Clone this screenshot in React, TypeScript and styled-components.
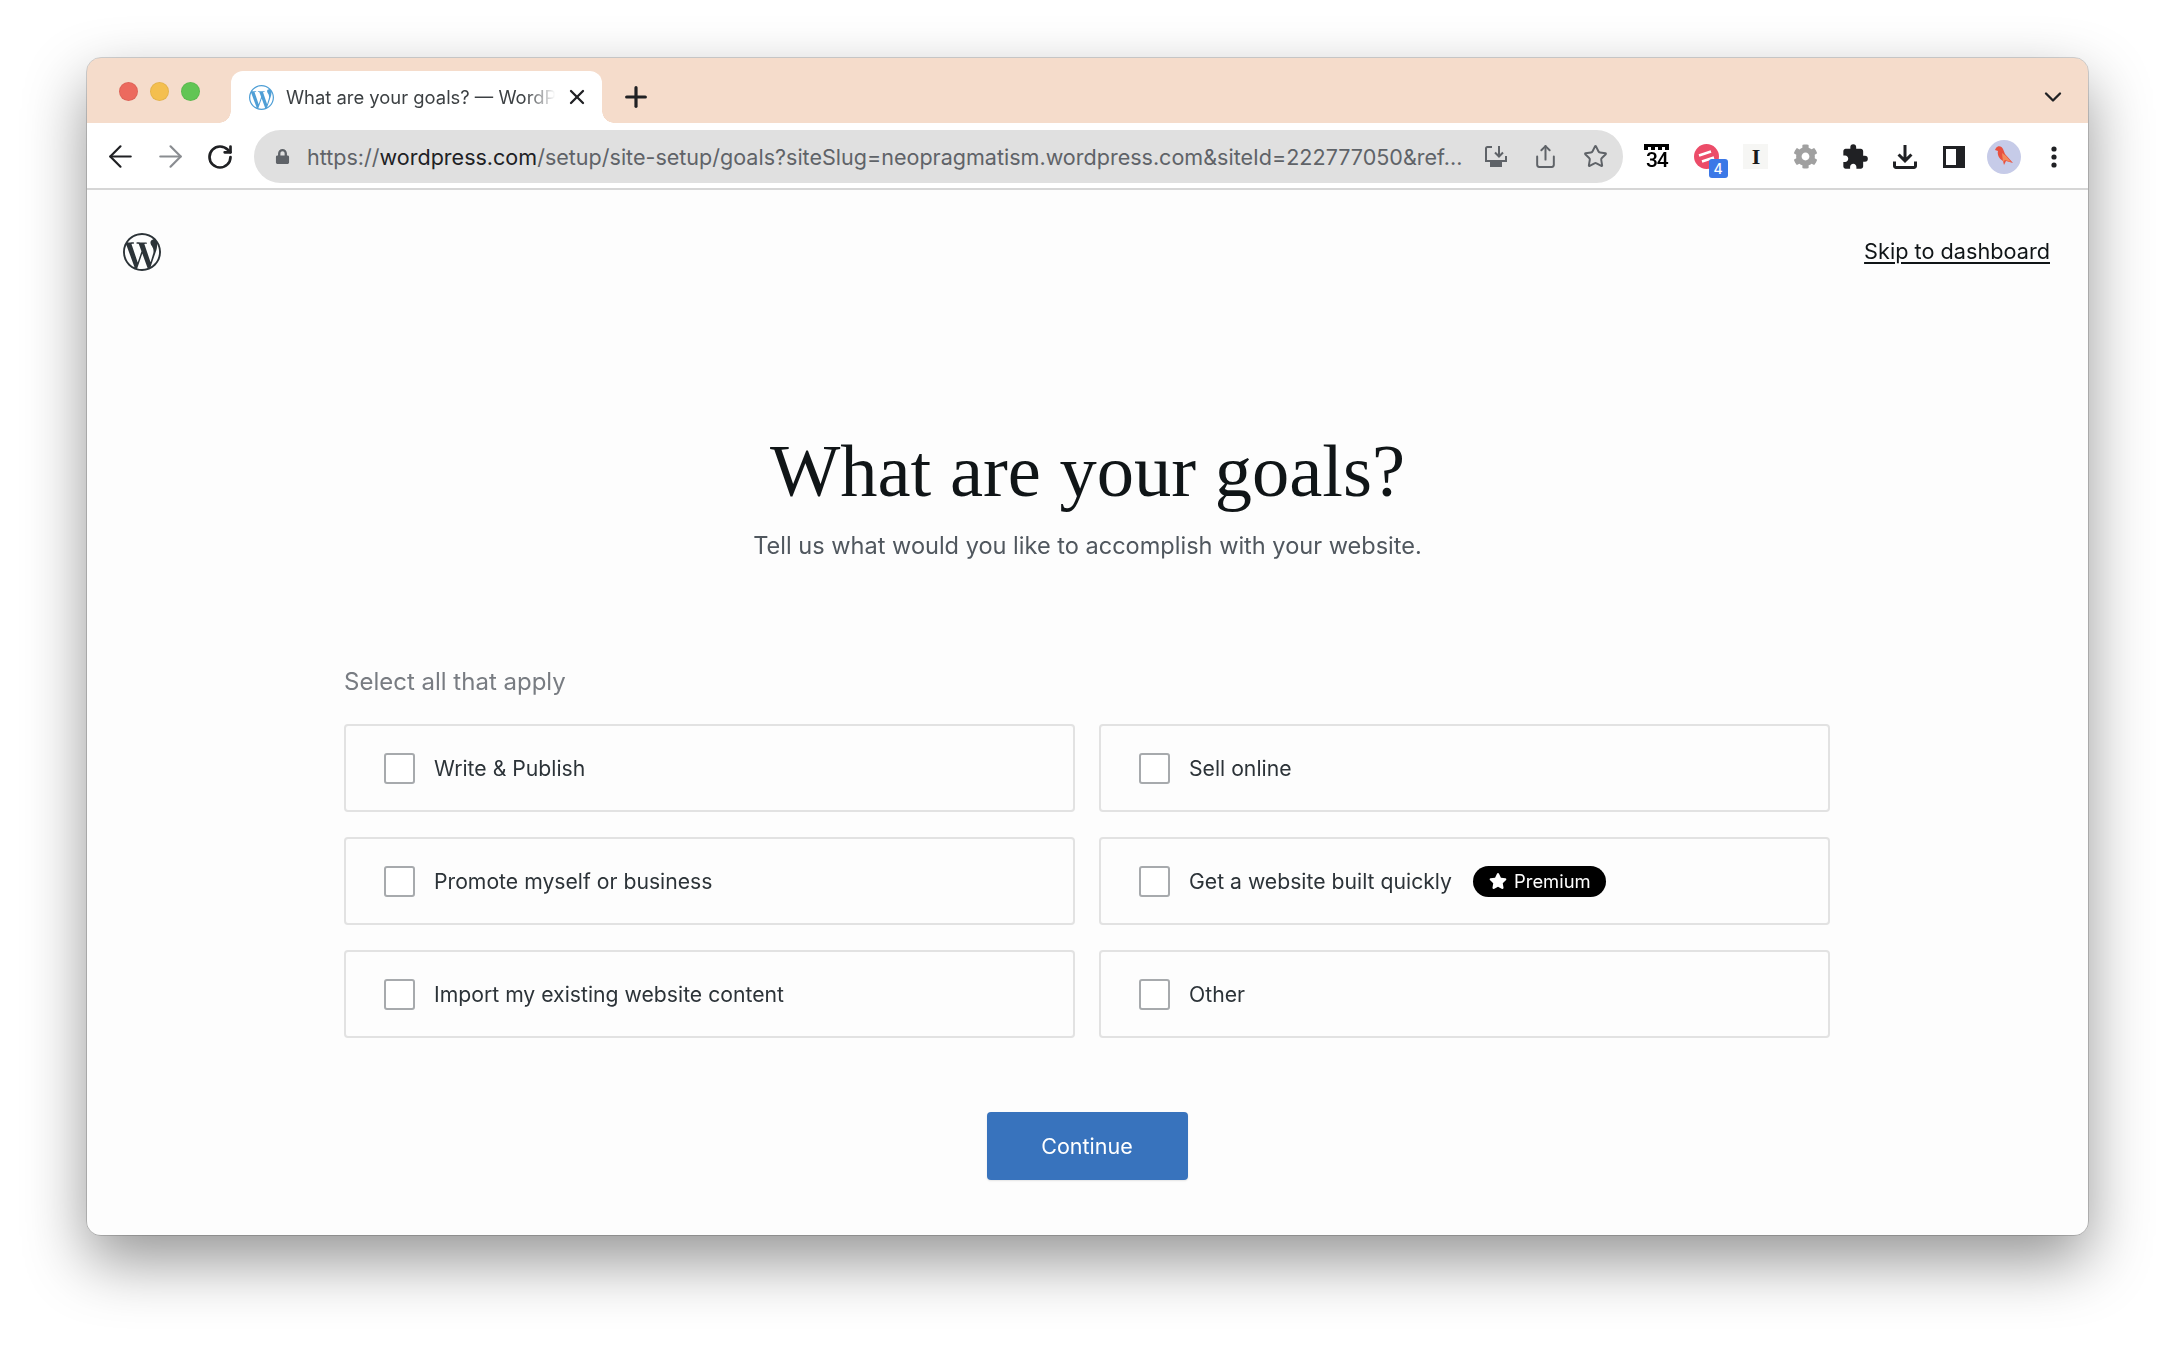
import React from 'react'
import styled, { createGlobalStyle } from 'styled-components'
import { ArrowLeft, ArrowRight, ChevronDown, Plus, RotateCw, Share, Star, X } from 'lucide-react'
import { FaCog, FaLock, FaStar } from 'react-icons/fa'
import { MdExtension, MdOutlineFileDownload } from 'react-icons/md'
import { SiWordpress } from 'react-icons/si'

const UI_FONT = '"Inter", "Liberation Sans", sans-serif'

const GlobalStyle = createGlobalStyle`
  html, body {
    margin: 0;
    padding: 0;
    background: #ffffff;
  }
  * {
    box-sizing: border-box;
  }
`

const Stage = styled.div`
  width: 2174px;
  height: 1350px;
  padding: 58px 0 0 87px;
  overflow: hidden;
  font-family: ${UI_FONT};
`

const Stack = styled.div`
  display: grid;
  > * {
    grid-area: 1 / 1;
  }
`

const Shadow = styled.div`
  width: 2001px;
  height: 1177px;
  border-radius: 14px;
  box-shadow: 0 26px 62px rgba(0, 0, 0, 0.42);
`

const Window = styled.div`
  width: 2001px;
  height: 1177px;
  display: flex;
  flex-direction: column;
  border-radius: 14px;
  overflow: hidden;
  background: #fdfdfd;
  outline: 1px solid rgba(0, 0, 0, 0.16);
  filter: blur(0.35px);
`

const TabBar = styled.div`
  height: 65px;
  flex: none;
  display: flex;
  background: #f5dccb;
  padding-left: 32px;
`

const Lights = styled.div`
  display: flex;
  gap: 12px;
  padding-top: 24px;
`

const Light = styled.span<{ $color: string }>`
  width: 19px;
  height: 19px;
  border-radius: 50%;
  background: ${({ $color }) => $color};
  border: 1px solid rgba(0, 0, 0, 0.06);
`

const Tab = styled.div`
  position: relative;
  width: 371px;
  height: 52px;
  margin: 13px 0 0 31px;
  display: flex;
  align-items: center;
  padding: 0 0 0 18px;
  background: #ffffff;
  border-radius: 12px 12px 0 0;
  color: #3c4043;

  &::before,
  &::after {
    content: '';
    position: absolute;
    bottom: 0;
    width: 12px;
    height: 12px;
  }
  &::before {
    left: -12px;
    background: radial-gradient(circle at 0 0, transparent 11.5px, #ffffff 12px);
  }
  &::after {
    right: -12px;
    background: radial-gradient(circle at 100% 0, transparent 11.5px, #ffffff 12px);
  }
`

const TabTitle = styled.span`
  width: 272px;
  margin-left: 12px;
  font-size: 18.4px;
  white-space: nowrap;
  overflow: hidden;
  -webkit-mask-image: linear-gradient(90deg, #000 88%, transparent 99%);
  mask-image: linear-gradient(90deg, #000 88%, transparent 99%);
`

const TabClose = styled.span`
  display: flex;
  margin-left: 7px;
  color: #202124;
`

const NewTab = styled.span`
  display: flex;
  margin: 13px 0 0 18px;
  height: 52px;
  align-items: center;
  color: #202124;
`

const TabMenu = styled.span`
  display: flex;
  margin-left: auto;
  margin-right: 21px;
  align-items: center;
  padding-top: 13px;
  color: #202124;
`

const Toolbar = styled.div`
  height: 67px;
  flex: none;
  display: flex;
  align-items: flex-start;
  padding: 7px 0 0 8px;
  background: #ffffff;
  border-bottom: 2px solid #d6d6d6;
`

const ToolSlot = styled.span<{ $width?: number; $color?: string }>`
  position: relative;
  width: ${({ $width }) => $width || 50}px;
  height: 53px;
  flex: none;
  display: flex;
  align-items: center;
  justify-content: center;
  color: ${({ $color }) => $color || '#202124'};
`

const AddressBar = styled.div`
  width: 1369px;
  height: 53px;
  flex: none;
  margin: 0 9px;
  display: flex;
  align-items: center;
  padding: 0 3px 0 21px;
  border-radius: 27px;
  background: #e0e0e0;
  color: #5f6368;
`

const Url = styled.span`
  flex: 1;
  min-width: 0;
  margin: 0 6px 0 17px;
  font-size: 21.54px;
  white-space: nowrap;
  overflow: hidden;
  color: #5f6368;

  b {
    font-weight: 400;
    color: #202124;
  }
`

const Calendar = styled.span`
  width: 25px;
  display: flex;
  flex-direction: column;
  align-items: center;
  color: #000000;
  font-family: Roboto, sans-serif;
  font-size: 21px;
  font-weight: 500;
  letter-spacing: -1.2px;
  line-height: 17px;

  &::before {
    content: '';
    width: 25px;
    height: 6px;
    margin-bottom: 2px;
    background:
      linear-gradient(#000000, #000000) top / 100% 3px no-repeat,
      repeating-linear-gradient(90deg, #000000 0 4px, #ffffff 4px 7px);
  }
`

const CountBadge = styled.span`
  position: absolute;
  left: 27px;
  top: 29px;
  width: 19px;
  height: 19px;
  border-radius: 3px;
  background: #3b78e7;
  color: #ffffff;
  font-size: 14px;
  font-weight: 500;
  line-height: 19px;
  text-align: center;
`

const SerifI = styled.span`
  width: 25px;
  height: 25px;
  background: #f6f6f4;
  color: #1a1a1a;
  font-family: 'Liberation Serif', serif;
  font-size: 22px;
  font-weight: 700;
  line-height: 25px;
  text-align: center;
`

const Avatar = styled.span`
  width: 34px;
  height: 34px;
  display: flex;
  align-items: center;
  justify-content: center;
  border-radius: 50%;
  background: #c6cbe8;
`

const Page = styled.div`
  flex: 1;
  display: flex;
  flex-direction: column;
  background: #fdfdfd;
`

const PageHeader = styled.header`
  display: flex;
  align-items: center;
  justify-content: space-between;
  padding: 43px 38px 0 36px;
  color: #2c3338;
`

const SkipLink = styled.a`
  margin-top: -3px;
  color: #101517;
  font-size: 21.7px;
  text-decoration: underline;
  text-underline-offset: 3px;
`

const Main = styled.main`
  display: flex;
  flex-direction: column;
  align-items: center;
  padding-top: 159px;
`

const Title = styled.h1`
  margin: 0;
  color: #101517;
  font-family: 'Liberation Serif', serif;
  font-size: 74.5px;
  font-weight: 400;
  line-height: 82px;
`

const Subtitle = styled.p`
  margin: 17px 0 0;
  color: #50575e;
  font-size: 23.55px;
  line-height: 34px;
`

const Form = styled.form`
  width: 1487px;
  margin-top: 102px;
`

const Hint = styled.div`
  color: #787c82;
  font-size: 24px;
  line-height: 34px;
  margin-bottom: 25px;
`

const OptionGrid = styled.div`
  display: grid;
  grid-template-columns: 731px 731px;
  grid-auto-rows: 88px;
  column-gap: 24px;
  row-gap: 25px;
`

const Option = styled.label`
  display: flex;
  align-items: center;
  padding-left: 38px;
  border: 2px solid #e2e2e2;
  border-radius: 4px;
  background: #fdfdfd;
  color: #2c3338;
  font-size: 21.2px;
`

const Box = styled.span`
  width: 31px;
  height: 31px;
  flex: none;
  margin-right: 19px;
  border: 2px solid #a7aaad;
  border-radius: 3px;
  background: #ffffff;
`

const PremiumBadge = styled.span`
  height: 31px;
  margin-left: 21px;
  display: flex;
  align-items: center;
  gap: 7px;
  padding: 0 15px 0 16px;
  border-radius: 16px;
  background: #000000;
  color: #ffffff;
  font-size: 18.4px;
`

const Actions = styled.div`
  width: 1486px;
  display: flex;
  justify-content: center;
  margin-top: 74px;
`

const ContinueButton = styled.button`
  width: 201px;
  height: 68px;
  border: 0;
  border-radius: 4px;
  background: #3873bd;
  color: #ffffff;
  font-family: ${UI_FONT};
  font-size: 21.5px;
  box-shadow: 0 1px 2px rgba(0, 0, 0, 0.1);
`

const options = [
  { label: 'Write & Publish' },
  { label: 'Sell online' },
  { label: 'Promote myself or business' },
  { label: 'Get a website built quickly', premium: true },
  { label: 'Import my existing website content' },
  { label: 'Other' },
]

const InstallIcon = () => (
  <svg width="22" height="21" viewBox="0 0 22 21" fill="none" stroke="currentColor" strokeWidth="2">
    <path d="M7 1H2.500A1.500 1.500 0 0 0 1 2.500V15h20v-5" />
    <path d="M14 0v10M10 6.500 14 10.500l4-4" />
    <path d="M6 16h10v4H6z" fill="currentColor" />
  </svg>
)

const SidePanelIcon = () => (
  <svg width="22" height="22" viewBox="0 0 22 22">
    <path fill="#202124" d="M0 0h22v22H0zM3 3v16h10V3z" />
  </svg>
)

const KebabIcon = () => (
  <svg width="8" height="22" viewBox="0 0 8 22" fill="#202124">
    <circle cx="4" cy="3" r="2.600" />
    <circle cx="4" cy="11" r="2.600" />
    <circle cx="4" cy="19" r="2.600" />
  </svg>
)

const BirdIcon = () => (
  <svg width="20" height="24" viewBox="0 0 20 24">
    <path fill="#e8503f" d="M2 3c2-3 6-2 7 1l2 5 8 9-7-2-2 4-1-4C5 14 3 9 4 6L1 5z" />
    <path fill="#f48a5c" d="M8 8l4 3 5 6-6-2-2 2z" />
  </svg>
)

const PocketIcon = () => (
  <svg width="25" height="25" viewBox="0 0 25 25">
    <circle cx="12.500" cy="12.500" r="12.500" fill="#ec4c69" />
    <path d="M5 11.500 17 7.500M8 17.500 20 13.500" stroke="#ffffff" strokeWidth="2.600" />
  </svg>
)

const App = () => (
  <Stage>
    <GlobalStyle />
    <Stack>
      <Shadow />
      <Window>
        <TabBar>
          <Lights>
            <Light $color="#ec6a5e" />
            <Light $color="#f4bf4f" />
            <Light $color="#61c554" />
          </Lights>
          <Tab>
            <SiWordpress size={25} color="#4f9fd6" />
            <TabTitle>What are your goals? — WordPress.com</TabTitle>
            <TabClose>
              <X size={24} strokeWidth={2.3} />
            </TabClose>
          </Tab>
          <NewTab>
            <Plus size={32} strokeWidth={2.4} />
          </NewTab>
          <TabMenu>
            <ChevronDown size={28} strokeWidth={2} />
          </TabMenu>
        </TabBar>
        <Toolbar>
          <ToolSlot>
            <ArrowLeft size={35} strokeWidth={1.5} />
          </ToolSlot>
          <ToolSlot $color="#8a8d91">
            <ArrowRight size={35} strokeWidth={1.5} />
          </ToolSlot>
          <ToolSlot>
            <RotateCw size={28} strokeWidth={2.3} />
          </ToolSlot>
          <AddressBar>
            <FaLock size={15} color="#5f6368" />
            <Url>
              https://<b>wordpress.com</b>/setup/site-setup/goals?siteSlug=neopragmatism.wordpress.com&siteId=222777050&ref...
            </Url>
            <ToolSlot $width={49.5} $color="#5f6368">
              <InstallIcon />
            </ToolSlot>
            <ToolSlot $width={49.5} $color="#5f6368">
              <Share size={25} strokeWidth={1.9} />
            </ToolSlot>
            <ToolSlot $width={49.5} $color="#5f6368">
              <Star size={25} strokeWidth={1.9} />
            </ToolSlot>
          </AddressBar>
          <ToolSlot $width={49.6}>
            <Calendar>34</Calendar>
          </ToolSlot>
          <ToolSlot $width={49.6}>
            <PocketIcon />
            <CountBadge>4</CountBadge>
          </ToolSlot>
          <ToolSlot $width={49.6}>
            <SerifI>I</SerifI>
          </ToolSlot>
          <ToolSlot $width={49.6} $color="#a0a0a0">
            <FaCog size={25} />
          </ToolSlot>
          <ToolSlot $width={49.6}>
            <MdExtension size={28} />
          </ToolSlot>
          <ToolSlot $width={49.6}>
            <MdOutlineFileDownload size={36} />
          </ToolSlot>
          <ToolSlot $width={49.6}>
            <SidePanelIcon />
          </ToolSlot>
          <ToolSlot $width={49.6}>
            <Avatar>
              <BirdIcon />
            </Avatar>
          </ToolSlot>
          <ToolSlot $width={49.6}>
            <KebabIcon />
          </ToolSlot>
        </Toolbar>
        <Page>
          <PageHeader>
            <SiWordpress size={38} />
            <SkipLink>Skip to dashboard</SkipLink>
          </PageHeader>
          <Main>
            <Title>What are your goals?</Title>
            <Subtitle>Tell us what would you like to accomplish with your website.</Subtitle>
            <Form>
              <Hint>Select all that apply</Hint>
              <OptionGrid>
                {options.map(option => (
                  <Option key={option.label}>
                    <Box />
                    {option.label}
                    {option.premium && (
                      <PremiumBadge>
                        <FaStar size={18} />
                        Premium
                      </PremiumBadge>
                    )}
                  </Option>
                ))}
              </OptionGrid>
              <Actions>
                <ContinueButton type="button">Continue</ContinueButton>
              </Actions>
            </Form>
          </Main>
        </Page>
      </Window>
    </Stack>
  </Stage>
)

export default App
